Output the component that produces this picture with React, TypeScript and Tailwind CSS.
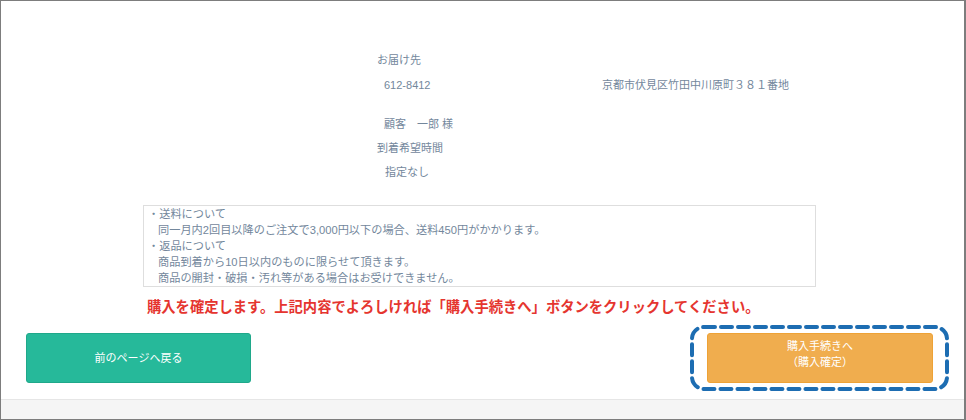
import React from 'react'

const font = { fontFamily: '"Liberation Sans", "Noto Sans CJK JP", sans-serif' }

function InfoBlock() {
  return (
    <div className="pl-[376px] text-[11px] leading-[16px] text-[#73879c]">
      <p>お届け先</p>
      <div className="mt-[9px] flex">
        <span className="w-[225px] pl-[7px]">612-8412</span>
        <span>京都市伏見区竹田中川原町３８１番地</span>
      </div>
      <p className="mt-[23px] pl-[7px]">顧客　一郎 様</p>
      <p className="mt-[8px]">到着希望時間</p>
      <p className="mt-[8px] pl-[8px]">指定なし</p>
    </div>
  )
}

function NoticeBox() {
  return (
    <div className="ml-[142px] mt-[25px] w-[673px] border border-[#dedede] pl-[4px] text-[11.2px] leading-[16px] text-[#73879c]">
      <p>・送料について</p>
      <p className="pl-[10px]">同一月内2回目以降のご注文で3,000円以下の場合、送料450円がかかります。</p>
      <p>・返品について</p>
      <p className="pl-[10px]">商品到着から10日以内のものに限らせて頂きます。</p>
      <p className="pl-[10px]">商品の開封・破損・汚れ等がある場合はお受けできません。</p>
    </div>
  )
}

function DashedRing() {
  return (
    <svg
      className="pointer-events-none absolute left-[-17px] top-[-8px]"
      width="259"
      height="66"
      viewBox="0 0 259 66"
    >
      <rect
        x="2"
        y="2"
        width="255"
        height="62"
        rx="12"
        fill="none"
        stroke="#1d6db2"
        strokeWidth="4"
        strokeDasharray="11 6"
        strokeLinecap="round"
      />
    </svg>
  )
}

export default function App() {
  return (
    <div
      style={font}
      className="flex h-[420px] w-[966px] flex-col border border-r-2 border-[#7d7d7d] bg-white"
    >
      <div className="flex-1 pt-[51px]">
        <InfoBlock />
        <NoticeBox />
        <p className="ml-[146px] mt-[10px] text-[14.3px] font-bold leading-[20px] text-[#e5352f]">
          購入を確定します。上記内容でよろしければ「購入手続きへ」ボタンをクリックしてください。
        </p>
        <div className="mt-[16px] flex items-start justify-between pl-[25px] pr-[31px]">
          <button className="flex h-[50px] w-[225px] items-center justify-center rounded-[3px] border border-[#1fa88a] bg-[#26b99a] text-[11px] text-white">
            前のページへ戻る
          </button>
          <div className="relative">
            <button className="flex h-[50px] w-[226px] flex-col items-center justify-center rounded-[3px] border border-[#eea236] bg-[#f0ad4e] pb-[8px] text-[11px] leading-[16px] text-white">
              <span>購入手続きへ</span>
              <span>（購入確定）</span>
            </button>
            <DashedRing />
          </div>
        </div>
      </div>
      <div className="h-[20px] border-t border-[#e6e6e6] bg-[#f5f5f5]" />
    </div>
  )
}
